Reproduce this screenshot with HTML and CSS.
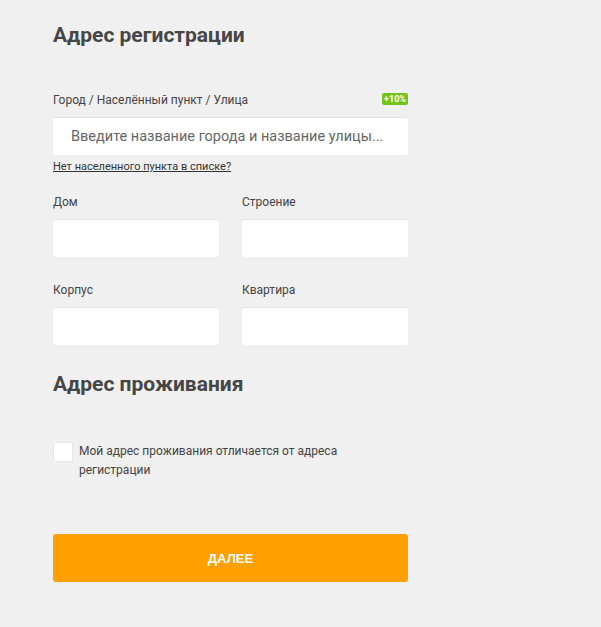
FILE: index.html
```html
<!DOCTYPE html>
<html lang="ru">
<head>
  <meta charset="UTF-8">
  <meta name="viewport" content="width=device-width, initial-scale=1.0">
  <title>Адрес регистрации</title>
  <link rel="stylesheet" href="styles.css">
</head>
<body>
  <form class="address-form">
    <h2 class="section-title">Адрес регистрации</h2>

    <div class="field field-city">
      <div class="label-row">
        <label for="city">Город / Населённый пункт / Улица</label>
        <span class="bonus">+10%</span>
      </div>
      <input type="text" id="city" class="input input-city" placeholder="Введите название города и название улицы...">
      <a href="#" class="no-city">Нет населенного пункта в списке?</a>
    </div>

    <div class="grid">
      <div class="field">
        <label for="house">Дом</label>
        <input type="text" id="house" class="input">
      </div>
      <div class="field">
        <label for="building">Строение</label>
        <input type="text" id="building" class="input">
      </div>
      <div class="field">
        <label for="block">Корпус</label>
        <input type="text" id="block" class="input">
      </div>
      <div class="field">
        <label for="flat">Квартира</label>
        <input type="text" id="flat" class="input">
      </div>
    </div>

    <h2 class="section-title section-live">Адрес проживания</h2>

    <label class="check">
      <input type="checkbox" class="check-box">
      <span class="check-text">Мой адрес проживания отличается от адреса регистрации</span>
    </label>

    <button type="button" class="next">Далее</button>
  </form>
</body>
</html>
```

FILE: styles.css
```css
body {
  margin: 0;
  font-family: Roboto, "Liberation Sans", Arial, sans-serif;
  color: #444;
  background-color: #f0f0f0;
}
.address-form {
  width: 355px;
  padding: 23px 0 40px 53px;
}
.section-title {
  margin: 0;
  font-size: 21px;
  line-height: 24px;
  font-weight: 700;
  color: #464646;
}
.field-city {
  margin-top: 46px;
}
.label-row {
  display: flex;
  justify-content: space-between;
  align-items: flex-end;
}
label {
  display: block;
  font-size: 12px;
  line-height: 14px;
  color: #444;
}
.bonus {
  background-color: #74c21c;
  color: #fff;
  font-size: 9px;
  font-weight: 700;
  line-height: 12px;
  padding: 0 2px;
  border-radius: 2px;
  margin-bottom: 2px;
}
.input {
  display: block;
  width: 100%;
  box-sizing: border-box;
  height: 38px;
  margin-top: 8px;
  border: none;
  border-top: 1px solid #e4e4e4;
  border-radius: 3px;
  background-color: #fff;
  font-family: inherit;
  font-size: 14px;
  color: #444;
  padding: 0 18px;
}
.input::placeholder {
  color: #666;
}
.input-city {
  height: 38px;
  margin-top: 10px;
  font-size: 14.5px;
}
.no-city {
  display: inline-block;
  margin-top: 5px;
  font-size: 11px;
  color: #333;
  text-decoration: underline;
}
.grid {
  display: grid;
  grid-template-columns: 1fr 1fr;
  column-gap: 23px;
  row-gap: 26px;
  margin-top: 21px;
}
.grid .input {
  margin-top: 10px;
}
.section-live {
  margin-top: 27px;
}
.check {
  display: flex;
  align-items: flex-start;
  margin-top: 46px;
  font-size: 12px;
  line-height: 19px;
}
.check-box {
  appearance: none;
  flex: none;
  width: 20px;
  height: 20px;
  margin: 0 6px 0 0;
  background-color: #fff;
  border: 1px solid #e6e6e6;
  border-radius: 2px;
}
.check-text {
  width: 280px;
  color: #444;
}
.next {
  display: block;
  width: 100%;
  height: 48px;
  margin-top: 54px;
  border: none;
  border-radius: 3px;
  background-color: #ffa000;
  color: #fff;
  font-family: "Liberation Sans", Arial, sans-serif;
  font-size: 13px;
  font-weight: 700;
  text-transform: uppercase;
}
```
